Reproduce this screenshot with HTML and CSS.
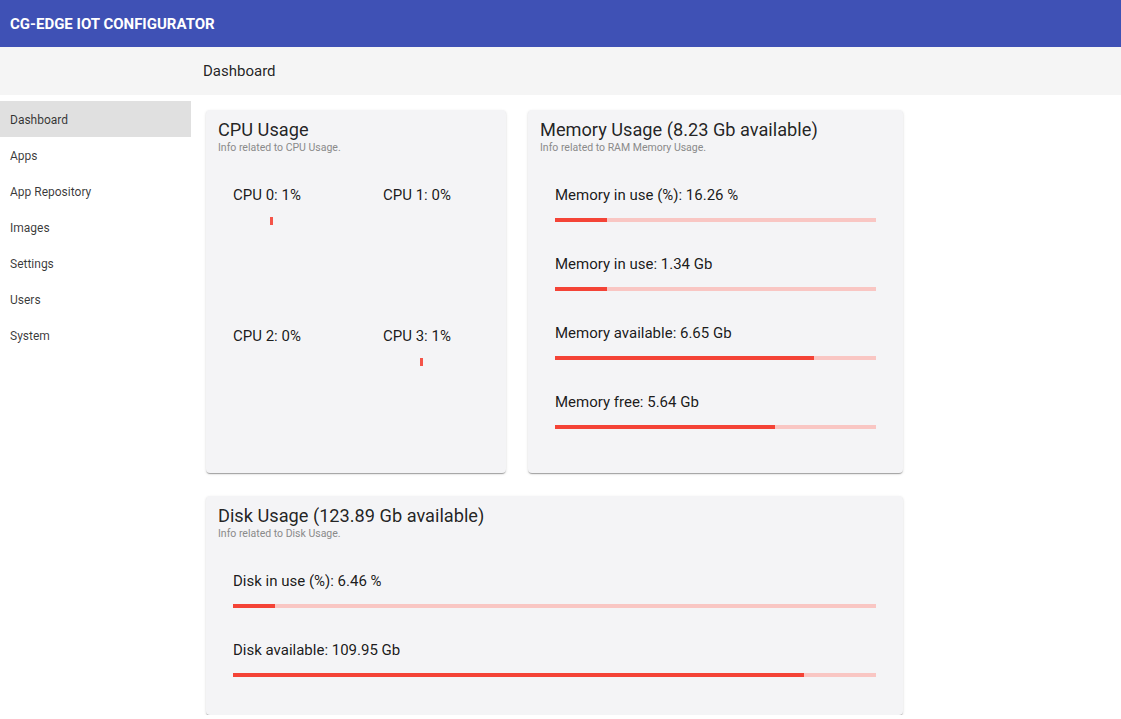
FILE: index.html
```html
<!DOCTYPE html>
<html lang="en">
<head>
<meta charset="utf-8">
<title>CG-EDGE IOT CONFIGURATOR</title>
<link rel="stylesheet" href="styles.css">
</head>
<body>
<header class="appbar">CG-EDGE IOT CONFIGURATOR</header>
<div class="subbar"><span class="subbar-title">Dashboard</span></div>
<div class="layout">
  <nav class="sidebar">
    <div class="nav-item active">Dashboard</div>
    <div class="nav-item">Apps</div>
    <div class="nav-item">App Repository</div>
    <div class="nav-item">Images</div>
    <div class="nav-item">Settings</div>
    <div class="nav-item">Users</div>
    <div class="nav-item">System</div>
  </nav>
  <main class="content">
    <div class="row">
      <section class="card card-cpu">
        <div class="card-head">
          <div class="card-title">CPU Usage</div>
          <div class="card-sub">Info related to CPU Usage.</div>
        </div>
        <div class="cpu-grid">
          <div class="cpu-cell"><div class="cpu-label">CPU 0: 1%</div><div class="cpu-chart"><span class="tick"></span></div></div>
          <div class="cpu-cell"><div class="cpu-label">CPU 1: 0%</div><div class="cpu-chart"></div></div>
          <div class="cpu-cell"><div class="cpu-label">CPU 2: 0%</div><div class="cpu-chart"></div></div>
          <div class="cpu-cell"><div class="cpu-label">CPU 3: 1%</div><div class="cpu-chart"><span class="tick"></span></div></div>
        </div>
      </section>
      <section class="card card-mem">
        <div class="card-head">
          <div class="card-title">Memory Usage (8.23 Gb available)</div>
          <div class="card-sub">Info related to RAM Memory Usage.</div>
        </div>
        <div class="items">
          <div class="item"><div class="item-label">Memory in use (%): 16.26 %</div><div class="bar"><div class="fill" style="width:16.26%"></div></div></div>
          <div class="item"><div class="item-label">Memory in use: 1.34 Gb</div><div class="bar"><div class="fill" style="width:16.26%"></div></div></div>
          <div class="item"><div class="item-label">Memory available: 6.65 Gb</div><div class="bar"><div class="fill" style="width:80.8%"></div></div></div>
          <div class="item"><div class="item-label">Memory free: 5.64 Gb</div><div class="bar"><div class="fill" style="width:68.5%"></div></div></div>
        </div>
      </section>
    </div>
    <section class="card card-disk">
      <div class="card-head">
        <div class="card-title">Disk Usage (123.89 Gb available)</div>
        <div class="card-sub">Info related to Disk Usage.</div>
      </div>
      <div class="items">
        <div class="item"><div class="item-label">Disk in use (%): 6.46 %</div><div class="bar"><div class="fill" style="width:6.46%"></div></div></div>
        <div class="item"><div class="item-label">Disk available: 109.95 Gb</div><div class="bar"><div class="fill" style="width:88.75%"></div></div></div>
      </div>
    </section>
  </main>
</div>
</body>
</html>
```

FILE: styles.css
```css
* { box-sizing: border-box; }
html, body { margin: 0; padding: 0; }
body {
  font-family: Roboto, "Liberation Sans", Arial, sans-serif;
  color: rgba(0,0,0,0.87);
  background: #fff;
  width: 1121px;
}
.appbar {
  height: 47px;
  background: #3f51b5;
  color: #fff;
  font-size: 15px;
  font-weight: 700;
  display: flex;
  align-items: center;
  padding-left: 10px;
}
.subbar {
  height: 48px;
  background: #f5f5f5;
  display: flex;
  align-items: center;
  padding-left: 203px;
}
.subbar-title { font-size: 15px; }
.layout {
  display: flex;
  align-items: flex-start;
}
.sidebar {
  width: 191px;
  flex: none;
  padding-top: 6px;
}
.nav-item {
  height: 36px;
  display: flex;
  align-items: center;
  padding: 1px 0 0 10px;
  font-size: 12px;
  color: rgba(0,0,0,0.78);
}
.nav-item.active { background: #e0e0e0; }
.content {
  padding: 15px 0 0 15px;
  display: flex;
  flex-direction: column;
  gap: 23px;
  width: 712px;
}
.row {
  display: flex;
  gap: 22px;
}
.card {
  background: #f4f4f6;
  border-radius: 4px;
  box-shadow: 0 2px 1px -1px rgba(0,0,0,0.2), 0 1px 1px 0 rgba(0,0,0,0.14), 0 1px 3px 0 rgba(0,0,0,0.12);
}
.card-cpu { width: 300px; height: 363px; }
.card-mem { width: 375px; height: 363px; }
.card-disk { width: 697px; height: 219px; }
.card-head { padding: 9px 12px 0 12px; }
.card-title { font-size: 18.2px; line-height: 22px; }
.card-sub { font-size: 10.5px; line-height: 12px; color: #8a8a8a; margin-top: 1px; }
.cpu-grid {
  display: grid;
  grid-template-columns: 150px 150px;
  grid-auto-rows: 141px;
  padding: 31px 0 0 27px;
}
.cpu-label { font-size: 15px; line-height: 20px; color: rgba(0,0,0,0.9); }
.cpu-chart { position: relative; height: 30px; }
.tick {
  position: absolute;
  left: 37px;
  top: 12px;
  width: 3px;
  height: 8px;
  background: #f44336;
  opacity: 0.9;
}
.items { padding: 0 27px; }
.item { padding-top: 31px; }
.item + .item { padding-top: 32px; }
.item-label { font-size: 15px; line-height: 20px; margin-bottom: 13px; color: rgba(0,0,0,0.9); }
.bar {
  height: 4px;
  background: #f9c6c3;
  overflow: hidden;
}
.fill { height: 100%; background: #f44336; }
```
